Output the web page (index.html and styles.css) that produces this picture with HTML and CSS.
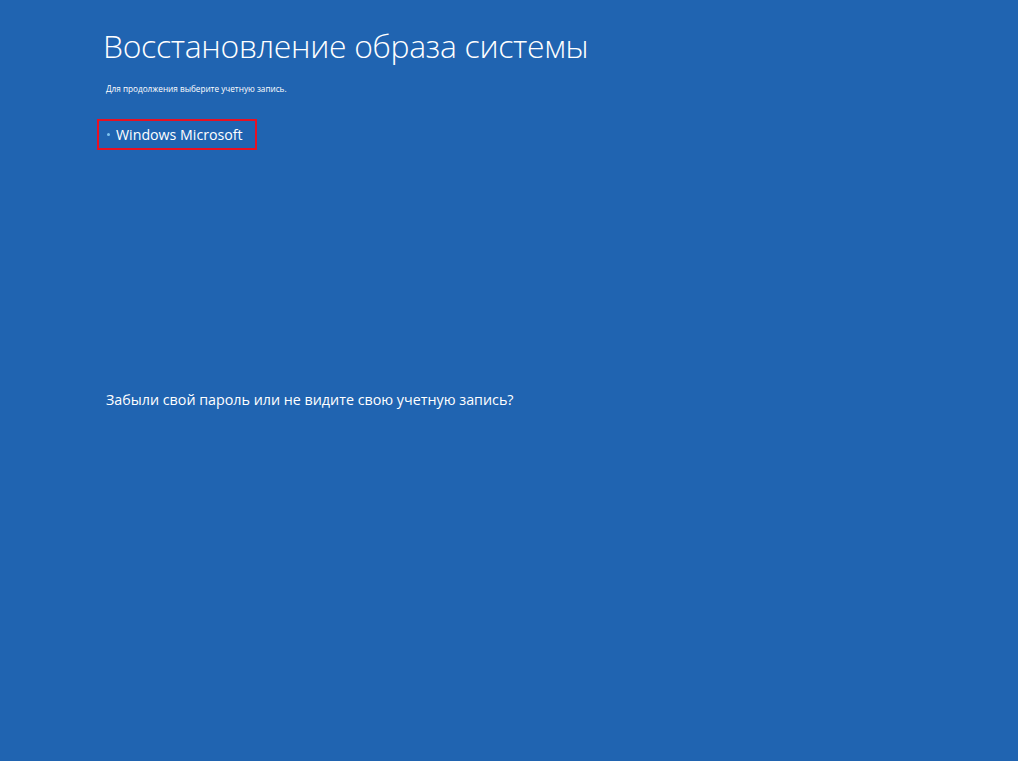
FILE: index.html
```html
<!DOCTYPE html>
<html lang="ru">
<head>
<meta charset="utf-8">
<link rel="stylesheet" href="styles.css">
</head>
<body>
<main class="page">
  <h1 class="title">Восстановление образа системы</h1>
  <p class="subtitle">Для продолжения выберите учетную запись.</p>
  <ul class="accounts">
    <li class="account"><span class="dot"></span><span class="name">Windows Microsoft</span></li>
  </ul>
  <p class="forgot">Забыли свой пароль или не видите свою учетную запись?</p>
</main>
</body>
</html>
```
FILE: styles.css
```css
html, body {
  margin: 0;
  padding: 0;
  height: 100%;
}
body {
  background: #2064b1;
  color: #ffffff;
  font-family: "Open Sans", "Noto Sans", sans-serif;
}
.page {
  padding: 25px 0 0 103px;
}
.title {
  margin: 0;
  font-weight: 300;
  font-size: 31.9px;
  line-height: 42px;
  letter-spacing: -0.3px;
}
.subtitle {
  margin: 16px 0 0 3px;
  font-size: 8.2px;
  line-height: 12px;
}
.accounts {
  list-style: none;
  margin: 24px 0 0 -6px;
  padding: 0;
  display: flex;
}
.account {
  display: flex;
  align-items: center;
  gap: 6px;
  width: 148px;
  height: 27px;
  border: 2px solid #e81123;
  padding: 0 0 0 8px;
  box-sizing: content-box;
}
.dot {
  width: 3px;
  height: 3px;
  border-radius: 50%;
  background: #7fc4f0;
}
.name {
  font-size: 14.2px;
  line-height: 20px;
}
.forgot {
  margin: 240px 0 0 3px;
  font-size: 14.3px;
  line-height: 20px;
}
```
